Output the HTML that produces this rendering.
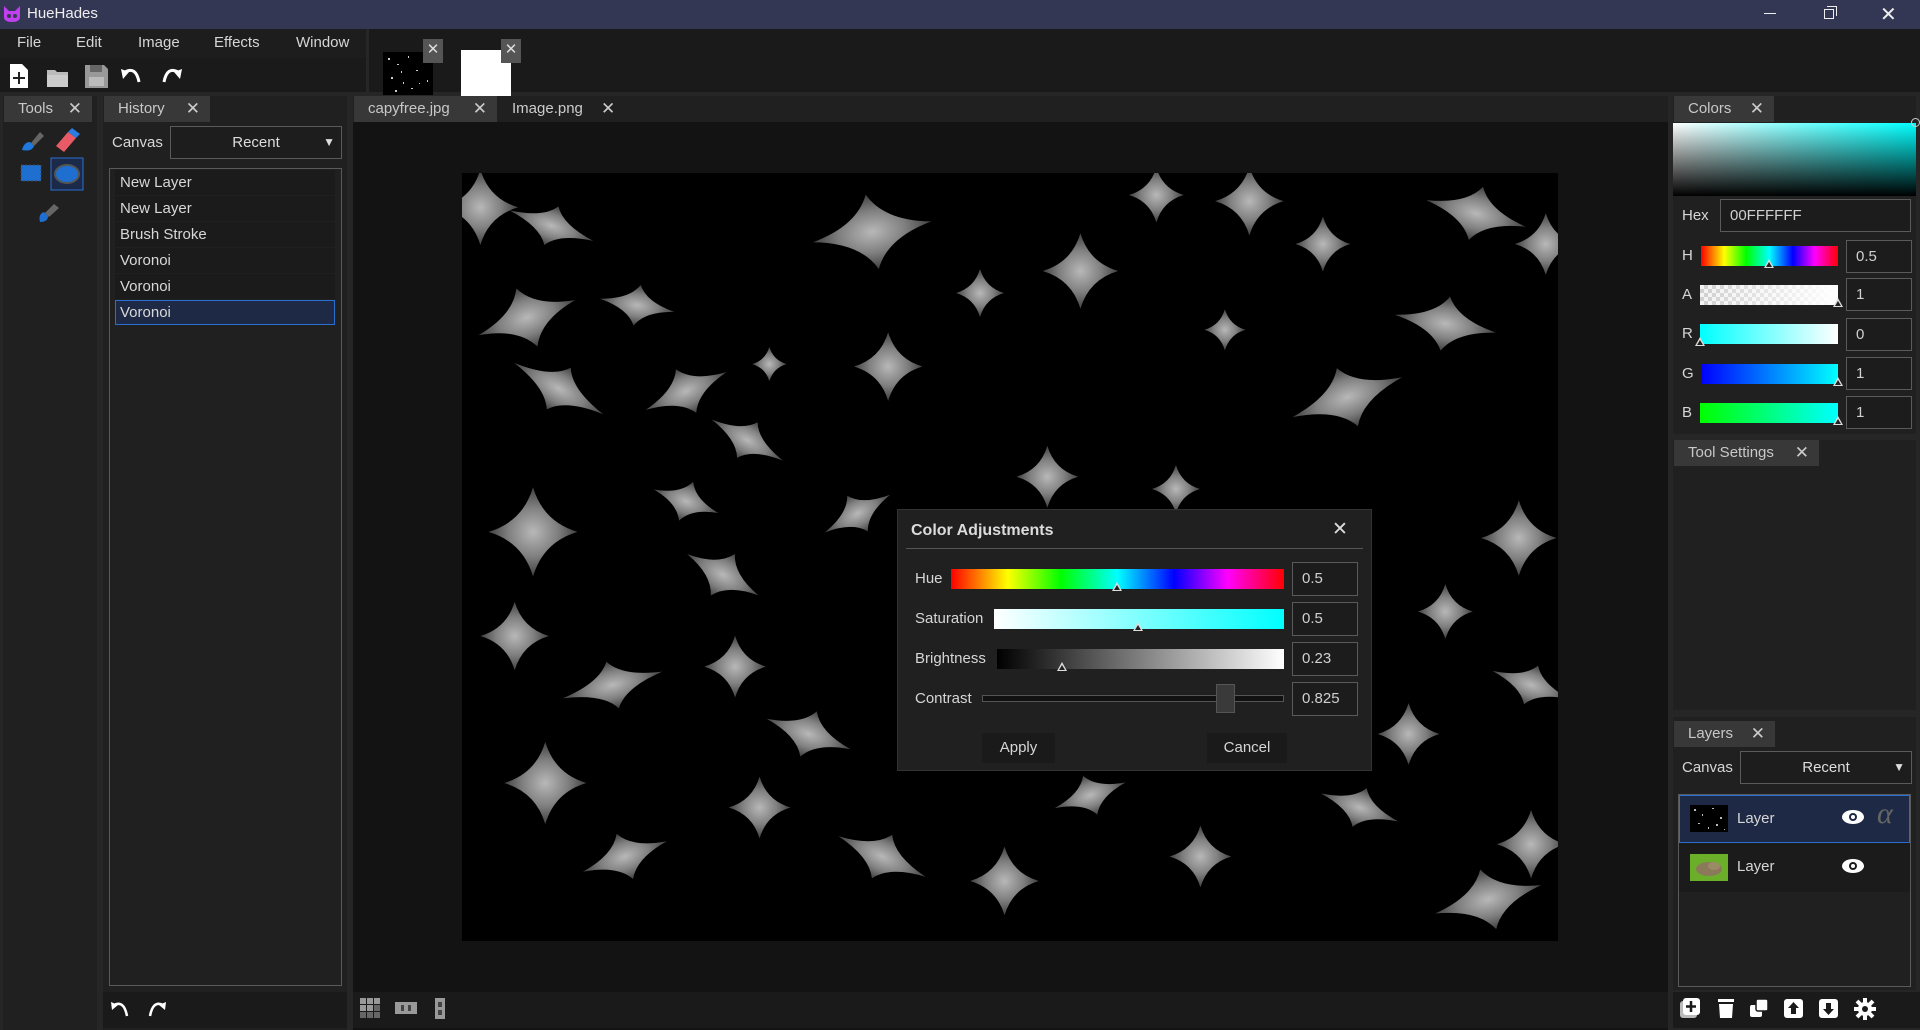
<!DOCTYPE html>
<html><head><meta charset="utf-8"><style>
*{box-sizing:border-box;margin:0;padding:0}
body{width:1920px;height:1030px;background:#262626;font-family:"Liberation Sans",sans-serif;color:#d6d6d6;position:relative;overflow:hidden;font-size:15px}
.a{position:absolute}
.tab{position:absolute;background:#383838;color:#c8c8c8;font-size:15px;line-height:26px;padding-left:14px}
.tab .x{position:absolute;right:10px;top:0;font-size:17px;color:#ccc}
.box{position:absolute;border:1px solid #5a5a5a;background:#1c1c1c}
.val{position:absolute;border:1px solid #5a5a5a;background:#1c1c1c;color:#d0d0d0;font-size:15px;padding-left:9px}
.tri{position:absolute;width:0;height:0;border-left:5px solid transparent;border-right:5px solid transparent;border-bottom:9px solid #ddd}
.tri:after{content:"";position:absolute;left:-3px;top:3px;border-left:3px solid transparent;border-right:3px solid transparent;border-bottom:5px solid #222}
.hrow{position:absolute;left:0;width:100%;height:25px;background:#1b1b1b;line-height:25px;padding-left:5px;font-size:15px;color:#d8d8d8}
</style></head><body>
<div class="a" style="left:0;top:0;width:1920px;height:29px;background:#333754"></div>
<svg class="a" style="left:3px;top:5px" width="18" height="18" viewBox="0 0 18 18"><path d="M1 1 L6 6 H12 L17 1 V12 Q17 17 9 17 Q1 17 1 12Z" fill="#c040f0"/><circle cx="6" cy="11" r="2" fill="#333754"/><circle cx="12" cy="11" r="2" fill="#333754"/></svg>
<div class="a" style="left:27px;top:5px;font-size:15px;color:#eee">HueHades</div>
<div class="a" style="left:1764px;top:13px;width:12px;height:1px;background:#eee"></div>
<div class="a" style="left:1824px;top:9px;width:10px;height:10px;border:1px solid #eee"></div>
<div class="a" style="left:1827px;top:6px;width:10px;height:10px;border-top:1px solid #eee;border-right:1px solid #eee"></div>
<div class="a" style="left:1880px;top:2px;font-size:20px;color:#eee">✕</div>
<div class="a" style="left:0;top:29px;width:1920px;height:63px;background:#1a1a1a"></div>
<div class="a" style="left:0;top:29px;width:366px;height:29px;background:#1d1d1d"></div>
<div class="a" style="left:366px;top:29px;width:3px;height:63px;background:#262626"></div>
<div class="a" style="left:17px;top:34px;font-size:15px">File</div>
<div class="a" style="left:76px;top:34px;font-size:15px">Edit</div>
<div class="a" style="left:138px;top:34px;font-size:15px">Image</div>
<div class="a" style="left:214px;top:34px;font-size:15px">Effects</div>
<div class="a" style="left:296px;top:34px;font-size:15px">Window</div>
<svg class="a" style="left:8px;top:62px" width="190" height="28" viewBox="0 0 190 28">
<path d="M2 2H14L20 8V26H2Z" fill="#fff"/><path d="M11 10V22M5 16H17" stroke="#222" stroke-width="2"/>
<path d="M39 8H47L49 10H60V25H39Z" fill="#bbb"/><path d="M39 13H60V25H39Z" fill="#ccc"/>
<path d="M77 3H96L100 7V26H77Z" fill="#999"/><rect x="82" y="3" width="12" height="7" fill="#666"/><rect x="81" y="15" width="15" height="9" fill="#bbb"/>
<path d="M115 17 L113 7 L121 10Z" fill="#fff"/><path d="M117 10 Q128 4 131 20" stroke="#fff" stroke-width="3" fill="none"/>
<path d="M172 17 L174 7 L166 10Z" fill="#fff"/><path d="M170 10 Q159 4 156 20" stroke="#fff" stroke-width="3" fill="none"/>
</svg>
<svg class="a" style="left:383px;top:52px" width="50" height="43"><rect width="50" height="43" fill="#000"/><g fill="#ccc"><rect x="5" y="6" width="2" height="2"/><rect x="14" y="12" width="2" height="1"/><rect x="25" y="4" width="1" height="2"/><rect x="33" y="18" width="2" height="1"/><rect x="8" y="25" width="2" height="2"/><rect x="20" y="30" width="1" height="2"/><rect x="40" y="9" width="2" height="2"/><rect x="44" y="28" width="1" height="2"/><rect x="28" y="36" width="2" height="1"/><rect x="12" y="38" width="2" height="2"/><rect x="36" y="31" width="1" height="1"/><rect x="18" y="19" width="1" height="2"/></g></svg>
<div class="a" style="left:423px;top:39px;width:20px;height:24px;background:#555;color:#ddd;text-align:center;font-size:15px;line-height:22px">✕</div>
<div class="a" style="left:461px;top:50px;width:50px;height:46px;background:#fff"></div>
<div class="a" style="left:501px;top:39px;width:20px;height:24px;background:#555;color:#ddd;text-align:center;font-size:15px;line-height:22px">✕</div>

<div class="a" style="left:3px;top:96px;width:94px;height:934px;background:#202020"></div>
<div class="tab" style="left:4px;top:96px;width:88px;height:26px">Tools<span class="x">✕</span></div>
<svg class="a" style="left:18px;top:128px" width="66" height="100" viewBox="0 0 66 100">
<path d="M4 22 Q6 14 12 14 L16 18 Q14 24 4 22Z" fill="#1e7ae0"/><path d="M13 15 L22 4 L26 8 L16 18Z" fill="#666"/>
<path d="M38 18 L50 4 L58 10 L46 24Z" fill="#e85a66"/><path d="M50 4 L54 0 L62 6 L58 10Z" fill="#2a7de0"/>
<rect x="3" y="37" width="20" height="16" fill="#1e6fd0" stroke="#444" stroke-dasharray="2 2"/>
<rect x="33" y="30" width="32" height="32" fill="#1b2a48" stroke="#2a6fd0"/><ellipse cx="49" cy="46" rx="12" ry="9" fill="#1e6fd0" stroke="#555" stroke-width="2"/>
<path d="M22 94 Q20 86 26 84 L30 88 Q30 94 22 94Z" fill="#1e6fd0"/><path d="M27 85 L36 76 L41 80 L31 89Z" fill="#666"/>
</svg>

<div class="a" style="left:103px;top:96px;width:244px;height:934px;background:#202020"></div>
<div class="tab" style="left:104px;top:96px;width:106px;height:26px">History<span class="x">✕</span></div>
<div class="a" style="left:112px;top:134px;font-size:15px">Canvas</div>
<div class="box" style="left:170px;top:126px;width:172px;height:33px;background:#1d1d1d;text-align:center;line-height:31px;color:#ddd">Recent<span style="position:absolute;right:6px;font-size:12px">▼</span></div>
<div class="box" style="left:109px;top:168px;width:233px;height:818px;background:#202020">
<div class="hrow" style="top:1px;left:5px;width:220px">New Layer</div>
<div class="hrow" style="top:27px;left:5px;width:220px">New Layer</div>
<div class="hrow" style="top:53px;left:5px;width:220px">Brush Stroke</div>
<div class="hrow" style="top:79px;left:5px;width:220px">Voronoi</div>
<div class="hrow" style="top:105px;left:5px;width:220px">Voronoi</div>
<div class="hrow" style="top:131px;left:5px;width:220px;background:#1e2a45;border:1px solid #2a6fd0;line-height:23px;padding-left:4px">Voronoi</div>
</div>
<div class="a" style="left:103px;top:992px;width:244px;height:36px;background:#1a1a1a"></div>
<svg class="a" style="left:108px;top:998px" width="60" height="24"><path d="M4 12 L3 4 L10 7Z" fill="#fff"/><path d="M6 7 Q16 2 19 18" stroke="#fff" stroke-width="2.5" fill="none"/><path d="M57 12 L58 4 L51 7Z" fill="#fff"/><path d="M55 7 Q45 2 42 18" stroke="#fff" stroke-width="2.5" fill="none"/></svg>

<div class="a" style="left:353px;top:96px;width:1315px;height:934px;background:#131313"></div>
<div class="a" style="left:353px;top:96px;width:1315px;height:26px;background:#202020"></div>
<div class="tab" style="left:354px;top:96px;width:143px;height:26px;padding-left:14px">capyfree.jpg<span class="x">✕</span></div>
<div class="a" style="left:512px;top:96px;font-size:15px;line-height:26px;color:#ccc">Image.png</div>
<div class="a" style="left:601px;top:96px;font-size:17px;line-height:26px;color:#ccc">✕</div>
<div class="a" style="left:353px;top:992px;width:1315px;height:36px;background:#1a1a1a"></div>
<svg class="a" style="left:358px;top:997px" width="100" height="24" fill="#999">
<rect x="2" y="1" width="6" height="6"/><rect x="9" y="1" width="6" height="6"/><rect x="16" y="1" width="6" height="6"/><rect x="2" y="8" width="6" height="6"/><rect x="9" y="8" width="6" height="6"/><rect x="16" y="8" width="6" height="6" fill="#666"/><rect x="2" y="15" width="6" height="6" fill="#666"/><rect x="9" y="15" width="6" height="6" fill="#666"/><rect x="16" y="15" width="6" height="6" fill="#666"/>
<rect x="37" y="5" width="22" height="12"/><rect x="43" y="8" width="3" height="6" fill="#444"/><rect x="50" y="8" width="3" height="6" fill="#444"/>
<rect x="77" y="1" width="10" height="21"/><rect x="80" y="5" width="4" height="5" fill="#444"/><rect x="80" y="13" width="4" height="5" fill="#444"/>
</svg>

<svg class="a" style="left:462px;top:173px" width="1096" height="768" viewBox="377 142 895 627" preserveAspectRatio="none">
<defs><radialGradient id="g"><stop offset="0" stop-color="#b8b8b8"/><stop offset="0.55" stop-color="#808080"/><stop offset="1" stop-color="#404040"/></radialGradient>
<symbol id="s" viewBox="-1 -1 2 2" overflow="visible"><path d="M0 -1.4 Q0.32 -0.32 1.4 0 Q0.32 0.32 0 1.4 Q-0.32 0.32 -1.4 0 Q-0.32 -0.32 0 -1.4Z" fill="url(#g)"/></symbol></defs>
<rect x="377" y="142" width="895" height="627" fill="#000"/>
<g>
<use href="#s" x="-1" y="-1" width="2" height="2" transform="translate(392,170) scale(22)"/>
<use href="#s" x="-1" y="-1" width="2" height="2" transform="translate(450,185) rotate(20) scale(26,12)"/>
<use href="#s" x="-1" y="-1" width="2" height="2" transform="translate(712,190) rotate(-10) scale(35,22)"/>
<use href="#s" x="-1" y="-1" width="2" height="2" transform="translate(882,222) scale(22)"/>
<use href="#s" x="-1" y="-1" width="2" height="2" transform="translate(944,160) scale(16)"/>
<use href="#s" x="-1" y="-1" width="2" height="2" transform="translate(1020,165) scale(20)"/>
<use href="#s" x="-1" y="-1" width="2" height="2" transform="translate(1205,175) rotate(15) scale(30,16)"/>
<use href="#s" x="-1" y="-1" width="2" height="2" transform="translate(1262,200) scale(18)"/>
<use href="#s" x="-1" y="-1" width="2" height="2" transform="translate(430,260) rotate(-20) scale(30,18)"/>
<use href="#s" x="-1" y="-1" width="2" height="2" transform="translate(520,250) rotate(10) scale(22,12)"/>
<use href="#s" x="-1" y="-1" width="2" height="2" transform="translate(725,300) scale(20)"/>
<use href="#s" x="-1" y="-1" width="2" height="2" transform="translate(800,240) scale(14)"/>
<use href="#s" x="-1" y="-1" width="2" height="2" transform="translate(1000,270) scale(12)"/>
<use href="#s" x="-1" y="-1" width="2" height="2" transform="translate(1180,265) rotate(10) scale(30,16)"/>
<use href="#s" x="-1" y="-1" width="2" height="2" transform="translate(456,318) rotate(30) scale(30,14)"/>
<use href="#s" x="-1" y="-1" width="2" height="2" transform="translate(560,320) rotate(-25) scale(26,14)"/>
<use href="#s" x="-1" y="-1" width="2" height="2" transform="translate(628,298) scale(10)"/>
<use href="#s" x="-1" y="-1" width="2" height="2" transform="translate(610,360) rotate(30) scale(24,12)"/>
<use href="#s" x="-1" y="-1" width="2" height="2" transform="translate(1100,325) rotate(-20) scale(34,18)"/>
<use href="#s" x="-1" y="-1" width="2" height="2" transform="translate(855,390) scale(18)"/>
<use href="#s" x="-1" y="-1" width="2" height="2" transform="translate(960,400) scale(14)"/>
<use href="#s" x="-1" y="-1" width="2" height="2" transform="translate(435,435) scale(26)"/>
<use href="#s" x="-1" y="-1" width="2" height="2" transform="translate(560,410) rotate(20) scale(20,12)"/>
<use href="#s" x="-1" y="-1" width="2" height="2" transform="translate(700,420) rotate(-30) scale(22,12)"/>
<use href="#s" x="-1" y="-1" width="2" height="2" transform="translate(1240,440) scale(22)"/>
<use href="#s" x="-1" y="-1" width="2" height="2" transform="translate(590,470) rotate(30) scale(24,14)"/>
<use href="#s" x="-1" y="-1" width="2" height="2" transform="translate(500,560) rotate(-15) scale(30,14)"/>
<use href="#s" x="-1" y="-1" width="2" height="2" transform="translate(420,520) scale(20)"/>
<use href="#s" x="-1" y="-1" width="2" height="2" transform="translate(600,545) scale(18)"/>
<use href="#s" x="-1" y="-1" width="2" height="2" transform="translate(660,600) rotate(20) scale(26,14)"/>
<use href="#s" x="-1" y="-1" width="2" height="2" transform="translate(445,640) scale(24)"/>
<use href="#s" x="-1" y="-1" width="2" height="2" transform="translate(510,700) rotate(-20) scale(26,14)"/>
<use href="#s" x="-1" y="-1" width="2" height="2" transform="translate(620,660) scale(18)"/>
<use href="#s" x="-1" y="-1" width="2" height="2" transform="translate(720,700) rotate(25) scale(28,14)"/>
<use href="#s" x="-1" y="-1" width="2" height="2" transform="translate(820,720) scale(20)"/>
<use href="#s" x="-1" y="-1" width="2" height="2" transform="translate(890,650) rotate(-20) scale(22,12)"/>
<use href="#s" x="-1" y="-1" width="2" height="2" transform="translate(980,700) scale(18)"/>
<use href="#s" x="-1" y="-1" width="2" height="2" transform="translate(1110,660) rotate(20) scale(24,12)"/>
<use href="#s" x="-1" y="-1" width="2" height="2" transform="translate(1215,735) rotate(-15) scale(32,18)"/>
<use href="#s" x="-1" y="-1" width="2" height="2" transform="translate(1250,690) scale(20)"/>
<use href="#s" x="-1" y="-1" width="2" height="2" transform="translate(1150,600) scale(18)"/>
<use href="#s" x="-1" y="-1" width="2" height="2" transform="translate(1250,560) rotate(20) scale(24,12)"/>
<use href="#s" x="-1" y="-1" width="2" height="2" transform="translate(1180,500) scale(16)"/>
<use href="#s" x="-1" y="-1" width="2" height="2" transform="translate(790,600) scale(16)"/>
<use href="#s" x="-1" y="-1" width="2" height="2" transform="translate(1080,200) scale(16)"/>
</g></svg>

<div class="a" style="left:897px;top:509px;width:475px;height:262px;background:#202020;border:1px solid #333"></div>
<div class="a" style="left:911px;top:522px;font-size:16px;font-weight:bold;color:#dcdcdc">Color Adjustments</div>
<div class="a" style="left:1332px;top:518px;font-size:19px;color:#ddd">✕</div>
<div class="a" style="left:906px;top:548px;width:457px;height:1px;background:#555"></div>
<div class="a" style="left:915px;top:570px">Hue</div>
<div class="a" style="left:951px;top:569px;width:333px;height:20px;background:linear-gradient(90deg,#f00,#ff0 17%,#0f0 33%,#0ff 50%,#00f 67%,#f0f 83%,#f00)"></div>
<div class="tri" style="left:1112px;top:582px"></div>
<div class="val" style="left:1292px;top:562px;width:66px;height:34px;line-height:32px">0.5</div>
<div class="a" style="left:915px;top:610px">Saturation</div>
<div class="a" style="left:994px;top:609px;width:290px;height:20px;background:linear-gradient(90deg,#fff,#0ff)"></div>
<div class="tri" style="left:1133px;top:622px"></div>
<div class="val" style="left:1292px;top:602px;width:66px;height:34px;line-height:32px">0.5</div>
<div class="a" style="left:915px;top:650px">Brightness</div>
<div class="a" style="left:997px;top:649px;width:287px;height:20px;background:linear-gradient(90deg,#000,#fff)"></div>
<div class="tri" style="left:1057px;top:662px"></div>
<div class="val" style="left:1292px;top:642px;width:66px;height:34px;line-height:32px">0.23</div>
<div class="a" style="left:915px;top:690px">Contrast</div>
<div class="a" style="left:982px;top:695px;width:302px;height:7px;background:#111;border:1px solid #555"></div>
<div class="a" style="left:1216px;top:684px;width:19px;height:29px;background:#3a3a3a;border:1px solid #555"></div>
<div class="val" style="left:1292px;top:682px;width:66px;height:34px;line-height:32px">0.825</div>
<div class="a" style="left:982px;top:733px;width:73px;height:30px;background:#1a1a1a;text-align:center;line-height:30px">Apply</div>
<div class="a" style="left:1207px;top:733px;width:80px;height:30px;background:#1a1a1a;text-align:center;line-height:30px">Cancel</div>

<div class="a" style="left:1673px;top:96px;width:243px;height:338px;background:#202020"></div>
<div class="tab" style="left:1674px;top:96px;width:100px;height:26px">Colors<span class="x">✕</span></div>
<div class="a" style="left:1673px;top:123px;width:243px;height:73px;background:linear-gradient(to bottom,rgba(0,0,0,0),#000),linear-gradient(90deg,#fff,#0ff)"></div>
<div class="a" style="left:1911px;top:118px;width:9px;height:9px;border:1px solid #ccc;border-radius:50%"></div>
<div class="a" style="left:1682px;top:207px">Hex</div>
<div class="val" style="left:1720px;top:199px;width:191px;height:33px;line-height:31px">00FFFFFF</div>
<div class="a" style="left:1682px;top:247px">H</div>
<div class="a" style="left:1701px;top:246px;width:137px;height:20px;background:linear-gradient(90deg,#f00,#ff0 17%,#0f0 33%,#0ff 50%,#00f 67%,#f0f 83%,#f00)"></div>
<div class="tri" style="left:1764px;top:259px"></div>
<div class="val" style="left:1846px;top:240px;width:66px;height:33px;line-height:31px">0.5</div>
<div class="a" style="left:1682px;top:286px">A</div>
<div class="a" style="left:1700px;top:285px;width:138px;height:20px;background:linear-gradient(90deg,rgba(255,255,255,.3),#fff),repeating-conic-gradient(#bbb 0 25%,#eee 0 50%) 0 0/8px 8px"></div>
<div class="tri" style="left:1833px;top:298px"></div>
<div class="val" style="left:1846px;top:278px;width:66px;height:33px;line-height:31px">1</div>
<div class="a" style="left:1682px;top:325px">R</div>
<div class="a" style="left:1700px;top:324px;width:138px;height:20px;background:linear-gradient(90deg,#0ff,#fff)"></div>
<div class="tri" style="left:1695px;top:337px"></div>
<div class="val" style="left:1846px;top:318px;width:66px;height:33px;line-height:31px">0</div>
<div class="a" style="left:1682px;top:365px">G</div>
<div class="a" style="left:1701px;top:364px;width:137px;height:20px;background:linear-gradient(90deg,#00f,#0ff)"></div>
<div class="tri" style="left:1833px;top:377px"></div>
<div class="val" style="left:1846px;top:357px;width:66px;height:33px;line-height:31px">1</div>
<div class="a" style="left:1682px;top:404px">B</div>
<div class="a" style="left:1700px;top:403px;width:138px;height:20px;background:linear-gradient(90deg,#0f0,#0ff)"></div>
<div class="tri" style="left:1833px;top:416px"></div>
<div class="val" style="left:1846px;top:396px;width:66px;height:33px;line-height:31px">1</div>
<div class="a" style="left:1673px;top:440px;width:243px;height:270px;background:#202020"></div>
<div class="tab" style="left:1674px;top:440px;width:145px;height:26px">Tool Settings<span class="x">✕</span></div>
<div class="a" style="left:1673px;top:717px;width:243px;height:273px;background:#202020"></div>
<div class="tab" style="left:1674px;top:721px;width:101px;height:26px">Layers<span class="x">✕</span></div>
<div class="a" style="left:1682px;top:759px">Canvas</div>
<div class="box" style="left:1740px;top:751px;width:172px;height:33px;background:#1d1d1d;text-align:center;line-height:31px;color:#ddd">Recent<span style="position:absolute;right:6px;font-size:12px">▼</span></div>
<div class="box" style="left:1678px;top:794px;width:233px;height:193px;background:#202020"></div>
<div class="a" style="left:1679px;top:795px;width:231px;height:48px;background:#1e2a45;border:1px solid #2a6fd0"></div>
<svg class="a" style="left:1690px;top:805px" width="38" height="27"><rect width="38" height="27" fill="#000"/><g fill="#bbb"><rect x="4" y="4" width="2" height="2"/><rect x="12" y="9" width="1" height="2"/><rect x="22" y="3" width="2" height="1"/><rect x="30" y="12" width="2" height="2"/><rect x="8" y="18" width="2" height="1"/><rect x="18" y="22" width="1" height="2"/><rect x="26" y="19" width="2" height="2"/><rect x="34" y="24" width="1" height="1"/></g></svg>
<div class="a" style="left:1737px;top:810px;font-size:15px">Layer</div>
<svg class="a" style="left:1841px;top:809px" width="24" height="16"><ellipse cx="12" cy="8" rx="11" ry="7" fill="#fff"/><circle cx="12" cy="8" r="4" fill="#1e2a45"/><circle cx="12" cy="8" r="2" fill="#fff"/></svg>
<div class="a" style="left:1877px;top:797px;font-size:30px;color:#666;font-family:'Liberation Serif',serif;font-style:italic">α</div>
<div class="a" style="left:1679px;top:843px;width:231px;height:49px;background:#1b1b1b"></div>
<svg class="a" style="left:1690px;top:854px" width="38" height="27"><rect width="38" height="27" fill="#6aae2a"/><ellipse cx="19" cy="15" rx="13" ry="7" fill="#8b7a5a"/><ellipse cx="24" cy="12" rx="6" ry="4" fill="#9b8a66"/></svg>
<div class="a" style="left:1737px;top:858px;font-size:15px">Layer</div>
<svg class="a" style="left:1841px;top:858px" width="24" height="16"><ellipse cx="12" cy="8" rx="11" ry="7" fill="#fff"/><circle cx="12" cy="8" r="4" fill="#1b1b1b"/><circle cx="12" cy="8" r="2" fill="#fff"/></svg>
<div class="a" style="left:1673px;top:992px;width:247px;height:36px;background:#1a1a1a"></div>
<svg class="a" style="left:1678px;top:996px" width="200" height="26" fill="#fff">
<rect x="2" y="5" width="17" height="17" rx="3" fill="#bbb"/><rect x="5" y="2" width="17" height="17" rx="3"/><path d="M13 5V16M8 10.5H18" stroke="#1a1a1a" stroke-width="2.5"/>
<rect x="40" y="3" width="16" height="3"/><path d="M41 8H55L54 22H42Z"/>
<rect x="72" y="9" width="12" height="12" rx="2"/><rect x="78" y="3" width="12" height="12" rx="2" stroke="#1a1a1a" stroke-width="1.5"/>
<rect x="106" y="3" width="19" height="19" rx="3"/><path d="M115.5 6L110 12H113V18H118V12H121Z" fill="#1a1a1a"/>
<rect x="141" y="3" width="19" height="19" rx="3"/><path d="M150.5 19L145 13H148V7H153V13H156Z" fill="#1a1a1a"/>
<circle cx="187" cy="13" r="7"/><g stroke="#fff" stroke-width="4"><path d="M187 2V24M176 13H198M179 5L195 21M195 5L179 21"/></g><circle cx="187" cy="13" r="3" fill="#1a1a1a"/>
</svg>
</body></html>
